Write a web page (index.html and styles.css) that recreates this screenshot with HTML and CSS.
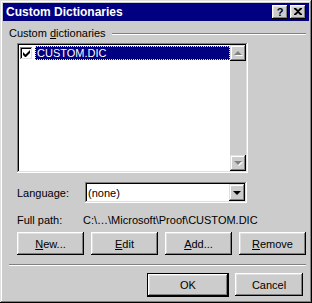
FILE: index.html
```html
<!DOCTYPE html>
<html lang="en">
<head>
  <meta charset="UTF-8" />
  <title>Custom Dictionaries</title>
  <link rel="stylesheet" href="styles.css">
</head>
<body>
  <div class="window">
    <div class="titlebar">
      <span class="title">Custom Dictionaries</span>
      <button class="tb-btn help">?</button>
      <button class="tb-btn close">
        <svg width="8" height="7" viewBox="0 0 8 7"><path d="M0 0h2l2 2 2-2h2v1L5 3.5 8 6v1H6L4 5 2 7H0V6l3-2.5L0 1z" fill="#000"/></svg>
      </button>
    </div>
    <div class="content">
      <div class="group-title">
        <span>Custom <u>d</u>ictionaries</span>
        <div class="etch"></div>
      </div>
      <div class="listbox">
        <div class="items">
          <div class="item">
            <span class="check">
              <svg width="7" height="7" viewBox="0 0 7 7"><path d="M0 2v3l2 2h1l4-4V0L2.5 4.5z" fill="#000"/></svg>
            </span>
            <span class="item-text">CUSTOM.DIC</span>
          </div>
        </div>
        <div class="scrollbar">
          <div class="sb-btn"><span class="arrow up"></span></div>
          <div class="sb-track"></div>
          <div class="sb-btn"><span class="arrow down"></span></div>
        </div>
      </div>
      <div class="field-row lang">
        <span class="label">Lan<u>g</u>uage:</span>
        <div class="combo">
          <span class="combo-text">(none)</span>
          <div class="sb-btn"><span class="arrow down dark"></span></div>
        </div>
      </div>
      <div class="field-row path">
        <span class="label">Full path:</span>
        <span class="path-text">C:\…\Microsoft\Proof\CUSTOM.DIC</span>
      </div>
      <div class="btn-row">
        <button class="btn"><u>N</u>ew...</button>
        <button class="btn"><u>E</u>dit</button>
        <button class="btn"><u>A</u>dd...</button>
        <button class="btn"><u>R</u>emove</button>
      </div>
      <div class="etch sep"></div>
      <div class="footer">
        <button class="btn default">OK</button>
        <button class="btn">Cancel</button>
      </div>
    </div>
  </div>
</body>
</html>
```

FILE: styles.css
```css
* {
  margin: 0;
  padding: 0;
  box-sizing: border-box;
}
body {
  background: #cccccc;
  font-family: "Liberation Sans", Arial, sans-serif;
  font-size: 11px;
  color: #000;
}
u {
  text-decoration: underline;
  text-underline-offset: 1px;
}
.window {
  width: 312px;
  height: 303px;
  padding: 3px;
  background: #cccccc;
  box-shadow: inset -1px -1px #000, inset 1px 1px #dfdfdf, inset -2px -2px #808080, inset 2px 2px #fff;
  display: flex;
  flex-direction: column;
}
.titlebar {
  height: 18px;
  background: #000080;
  display: flex;
  align-items: center;
  padding: 0 3px 0 3px;
}
.title {
  flex: 1;
  color: #fff;
  font-weight: bold;
  font-size: 12px;
}
.tb-btn {
  width: 16px;
  height: 14px;
  border: none;
  background: #cccccc;
  box-shadow: inset -1px -1px #000, inset 1px 1px #fff, inset -2px -2px #808080, inset 2px 2px #dfdfdf;
  font-family: "Liberation Sans", Arial, sans-serif;
  font-weight: bold;
  font-size: 11px;
  display: flex;
  align-items: center;
  justify-content: center;
  padding-bottom: 1px;
}
.tb-btn.close {
  margin-left: 2px;
}
.content {
  flex: 1;
  padding: 6px 3px 0 6px;
  display: flex;
  flex-direction: column;
}
.group-title {
  display: flex;
  align-items: center;
  gap: 6px;
  height: 13px;
  line-height: 13px;
}
.etch {
  flex: 1;
  height: 2px;
  border-top: 1px solid #808080;
  border-bottom: 1px solid #fff;
}
.listbox {
  margin: 3px 0 0 8px;
  width: 231px;
  height: 130px;
  background: #fff;
  padding: 2px;
  box-shadow: inset -1px -1px #fff, inset 1px 1px #808080, inset -2px -2px #dfdfdf, inset 2px 2px #000;
  display: flex;
}
.items {
  flex: 1;
}
.item {
  display: flex;
  align-items: center;
  height: 14px;
  margin-top: 1px;
}
.check {
  width: 13px;
  height: 13px;
  margin-left: 1px;
  background: #fff;
  box-shadow: inset -1px -1px #fff, inset 1px 1px #808080, inset -2px -2px #dfdfdf, inset 2px 2px #000;
  display: flex;
  align-items: center;
  justify-content: center;
}
.item-text {
  flex: 1;
  margin-left: 2px;
  height: 14px;
  line-height: 12px;
  background: #000080;
  color: #fff;
  padding-left: 1px;
  border: 1px dotted #ffff00;
}
.scrollbar {
  width: 16px;
  display: flex;
  flex-direction: column;
  background: #e4e4e4;
}
.sb-btn {
  width: 16px;
  height: 16px;
  background: #cccccc;
  box-shadow: inset -1px -1px #000, inset 1px 1px #dfdfdf, inset -2px -2px #808080, inset 2px 2px #fff;
  display: flex;
  align-items: center;
  justify-content: center;
}
.sb-track {
  flex: 1;
  background: #cccccc;
}
.arrow {
  width: 0;
  height: 0;
  border-left: 4px solid transparent;
  border-right: 4px solid transparent;
}
.arrow.up {
  border-bottom: 4px solid #808080;
  filter: drop-shadow(1px 1px 0 #fff);
}
.arrow.down {
  border-top: 4px solid #808080;
  filter: drop-shadow(1px 1px 0 #fff);
}
.arrow.down.dark {
  border-top-color: #000;
  filter: none;
}
.field-row {
  display: flex;
  align-items: center;
  padding-left: 8px;
}
.label {
  width: 68px;
}
.lang {
  margin-top: 9px;
  height: 21px;
}
.combo {
  width: 162px;
  height: 21px;
  background: #fff;
  padding: 2px;
  box-shadow: inset -1px -1px #fff, inset 1px 1px #808080, inset -2px -2px #dfdfdf, inset 2px 2px #000;
  display: flex;
  align-items: center;
}
.combo-text {
  flex: 1;
  padding-left: 1px;
}
.combo .sb-btn {
  height: 17px;
}
.path {
  margin-top: 10px;
  height: 13px;
}
.path-text {
  margin-left: -2px;
}
.btn {
  height: 23px;
  border: none;
  background: #cccccc;
  font-family: "Liberation Sans", Arial, sans-serif;
  font-size: 11px;
  color: #000;
  box-shadow: inset -1px -1px #000, inset 1px 1px #fff, inset -2px -2px #808080, inset 2px 2px #dfdfdf;
}
.btn-row {
  margin-top: 6px;
  padding-left: 8px;
  display: flex;
  gap: 7px;
}
.btn-row .btn {
  width: 67px;
}
.sep {
  flex: none;
  margin: 9px 0 0 0;
  width: 297px;
}
.footer {
  margin-top: 7px;
  display: flex;
  justify-content: flex-end;
  gap: 6px;
  padding-right: 3px;
}
.footer .btn {
  width: 68px;
}
.footer .btn.default {
  width: 82px;
  height: 24px;
  box-shadow: inset -1px -1px #000, inset 1px 1px #000, inset -2px -2px #000, inset 2px 2px #fff, inset -3px -3px #808080, inset 3px 3px #dfdfdf;
}
```
